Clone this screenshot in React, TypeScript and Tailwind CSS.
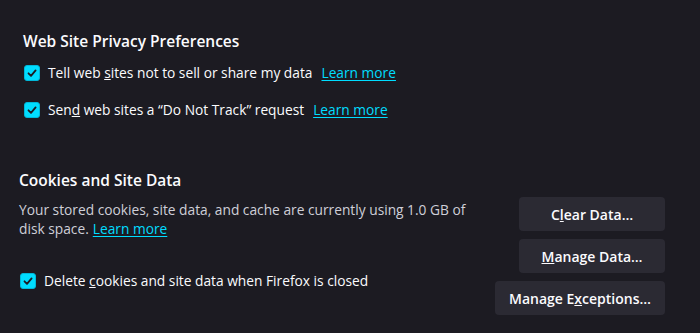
import React from "react";

const font = { fontFamily: '"Open Sans", "Noto Sans", sans-serif' };

function Check() {
  return (
    <span className="w-[16px] h-[16px] rounded-[3px] bg-[#00ddff] border border-[#00b8d9] flex items-center justify-center shrink-0">
      <svg width="12" height="12" viewBox="0 0 12 12">
        <path d="M2.5 6.3 L5 8.8 L9.6 3.4" fill="none" stroke="#1c1b22" strokeWidth="1.8" strokeLinecap="round" strokeLinejoin="round" />
      </svg>
    </span>
  );
}

function Link() {
  return <span className="text-[#00ddff] underline underline-offset-2">Learn more</span>;
}

function Btn({ children, w }: { children: React.ReactNode; w: string }) {
  return (
    <div className={`${w} h-[34px] rounded-[4px] bg-[#2b2a33] flex items-center justify-center text-[14px] font-semibold text-[#fbfbfe]`}>
      {children}
    </div>
  );
}

export default function App() {
  return (
    <div style={font} className="w-[700px] h-[333px] bg-[#1c1b22] text-[#fbfbfe] overflow-hidden pl-[19px] pr-[35px] pt-[30px]">
      <div className="pl-[4px]">
        <div className="text-[15.5px] font-semibold leading-[22px]">Web Site Privacy Preferences</div>
        <div className="mt-[9px] flex items-center gap-[8px] h-[24px] text-[13.75px] pl-[1px]">
          <Check />
          <span>Tell web <u>s</u>ites not to sell or share my data</span>
          <span className="ml-[1px]"><Link /></span>
        </div>
        <div className="mt-[13px] flex items-center gap-[8px] h-[24px] text-[13.75px] pl-[1px]">
          <Check />
          <span>Sen<u>d</u> web sites a “Do Not Track” request</span>
          <span className="ml-[1px]"><Link /></span>
        </div>
      </div>
      <div className="mt-[47px] flex justify-between">
        <div>
          <div className="text-[15.5px] font-semibold leading-[22px]">Cookies and Site Data</div>
          <div className="mt-[9px] w-[460px] text-[13.75px] leading-[19px] text-[#cfcfd8]">
            <div>Your stored cookies, site data, and cache are currently using 1.0 GB of</div>
            <div className="flex gap-[4px]">
              <span>disk space.</span>
              <Link />
            </div>
          </div>
          <div className="mt-[31px] flex items-center gap-[8px] h-[24px] text-[13.75px] pl-[1px]">
            <Check />
            <span>Delete <u>c</u>ookies and site data when Firefox is closed</span>
          </div>
        </div>
        <div className="flex flex-col items-end gap-[8px] pt-[28px]">
          <Btn w="w-[146px]">C<u>l</u>ear Data…</Btn>
          <Btn w="w-[146px]"><span><u>M</u>anage Data…</span></Btn>
          <Btn w="w-[170px]"><span>Manage E<u>x</u>ceptions…</span></Btn>
        </div>
      </div>
    </div>
  );
}
